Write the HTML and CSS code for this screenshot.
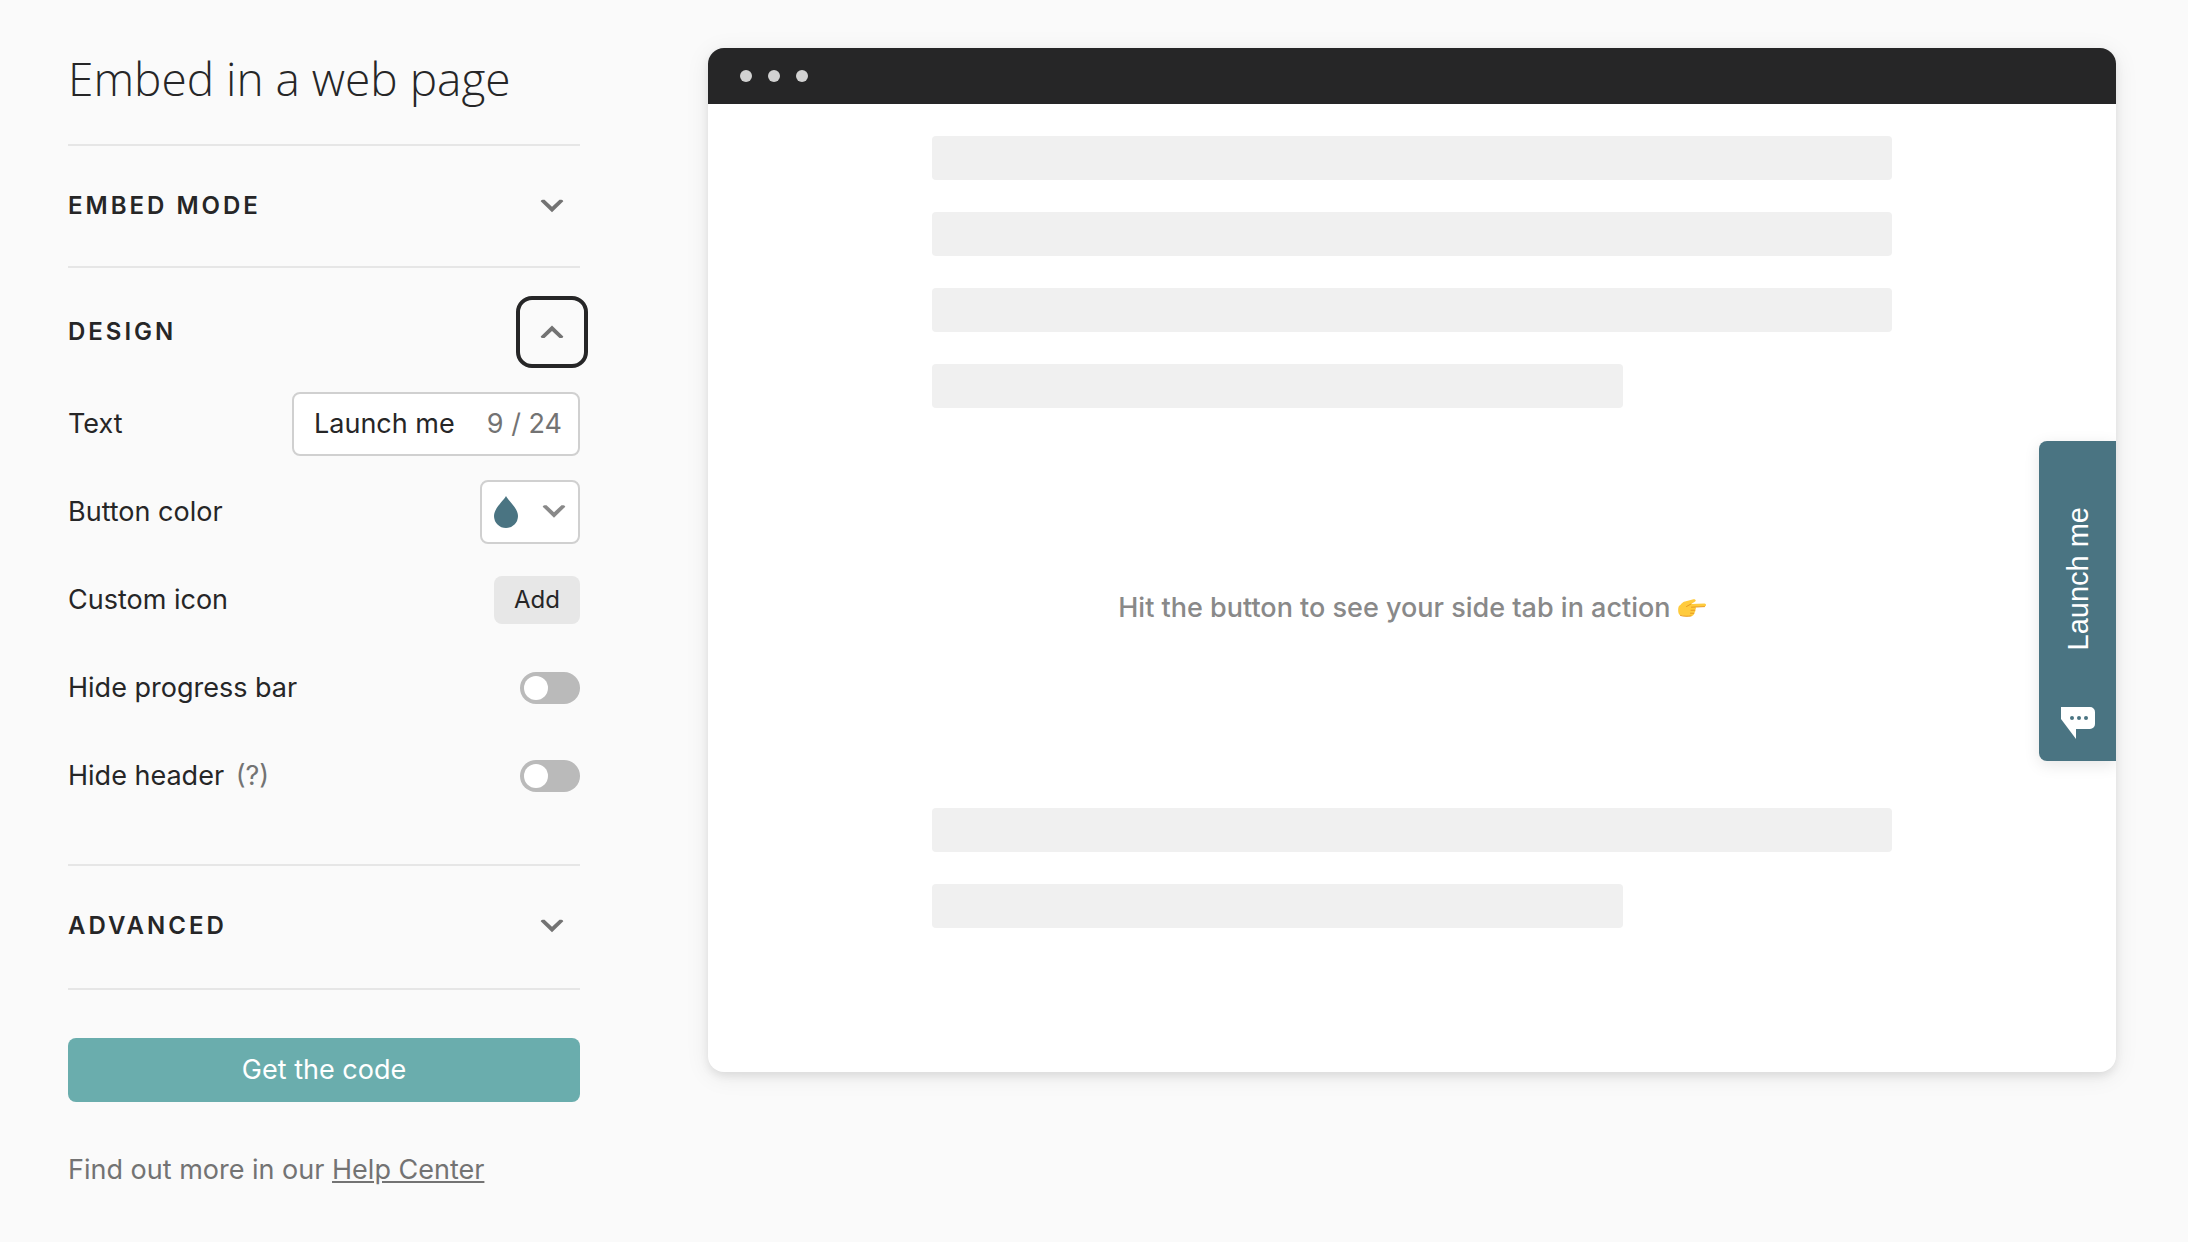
FILE: index.html
```html
<!DOCTYPE html>
<html lang="en">
<head>
<meta charset="utf-8">
<title>Embed in a web page</title>
<link rel="stylesheet" href="styles.css">
</head>
<body>
<main class="page">
  <aside class="settings">
    <h1 class="title">Embed in a web page</h1>
    <section class="section">
      <div class="section-head">
        <h2 class="section-name">Embed mode</h2>
        <button class="toggle-btn" type="button" aria-label="Expand embed mode" aria-expanded="false">
          <svg class="chevron" viewBox="0 0 24 14"><path d="M12 13.2.7 2.2Q1 .7 2.5.7h2L12 7.7l7.5-7h2q1.5 0 1.8 1.5Z"/></svg>
        </button>
      </div>
    </section>
    <section class="section section-open">
      <div class="section-head">
        <h2 class="section-name">Design</h2>
        <button class="toggle-btn is-focused" type="button" aria-label="Collapse design" aria-expanded="true">
          <svg class="chevron" viewBox="0 0 24 14"><path d="M12 .5.7 11.5Q1 13 2.5 13h2L12 6l7.5 7h2q1.5 0 1.8-1.5Z"/></svg>
        </button>
      </div>
      <div class="row">
        <label for="label-text">Text</label>
        <div class="text-field">
          <input id="label-text" class="text-input" type="text" value="Launch me" maxlength="24">
          <span class="counter">9 / 24</span>
        </div>
      </div>
      <div class="row">
        <span id="color-label">Button color</span>
        <button class="color-btn" type="button" aria-labelledby="color-label">
          <svg class="drop" viewBox="0 0 24 32"><path d="M12 0C9.500 5 0 12 0 20a12 12 0 0 0 24 0C24 12 14.500 5 12 0Z"/></svg>
          <svg class="chevron chevron-light" viewBox="0 0 24 14"><path d="M12 12.700.7 1.700Q1 .2 2.500.2h2L12 7.200l7.500-7h2q1.500 0 1.800 1.500Z"/></svg>
        </button>
      </div>
      <div class="row">
        <span>Custom icon</span>
        <button class="add-btn" type="button">Add</button>
      </div>
      <div class="row">
        <label for="hide-progress">Hide progress bar</label>
        <input id="hide-progress" class="switch" type="checkbox" role="switch">
      </div>
      <div class="row">
        <label for="hide-header">Hide header <span class="hint">(?)</span></label>
        <input id="hide-header" class="switch" type="checkbox" role="switch">
      </div>
    </section>
    <section class="section section-last">
      <div class="section-head">
        <h2 class="section-name">Advanced</h2>
        <button class="toggle-btn" type="button" aria-label="Expand advanced" aria-expanded="false">
          <svg class="chevron" viewBox="0 0 24 14"><path d="M12 13.2.7 2.2Q1 .7 2.5.7h2L12 7.7l7.5-7h2q1.5 0 1.8 1.5Z"/></svg>
        </button>
      </div>
    </section>
    <div class="actions">
      <button class="primary-btn" type="button">Get the code</button>
      <p class="help">Find out more in our <a class="help-link" href="#help">Help Center</a></p>
    </div>
  </aside>

  <section class="preview" aria-label="Preview">
    <div class="preview-bar"><i class="dot"></i><i class="dot"></i><i class="dot"></i></div>
    <div class="preview-body">
      <div class="lines">
        <div class="line"></div>
        <div class="line"></div>
        <div class="line"></div>
        <div class="line line-short"></div>
      </div>
      <p class="message">Hit the button to see your side tab in action
        <svg class="hand" viewBox="0 0 28 18" role="img" aria-label="pointing right"><path fill="#ffcb3d" d="M1 7C3 6 4 3 7 2.500L15.500.200C18 0 18.500 2 16.500 3L13 5l13.500-.500c2 0 2 3 0 3L17.500 8c.8 1 .5 2.500-.5 3 .6 1.200 0 2.500-1 3 .3 2-1.500 3.300-4 3.300-4 0-8-.3-10.500-1.500C-.2 14-.2 9 1 7Z"/><path fill="none" stroke="#e89b20" stroke-width="1" stroke-linecap="round" d="M8.500 7.500 13 5m13.500 2.600L13.500 8.200m3.500 3-4 .1m3 3-3.500-.1M2.500 16.500c3 1 8 1 10.500.4"/></svg></p>
      <div class="lines">
        <div class="line"></div>
        <div class="line line-short"></div>
      </div>
    </div>
    <button class="side-tab" type="button">
      <span class="side-tab-text">Launch me</span>
      <svg class="chat" viewBox="0 0 34 34"><path fill="#fff" d="M0 1h29a5 5 0 0 1 5 5v12a5 5 0 0 1-5 5H15v10L0 13Z"/><g fill="#4a7482"><circle cx="11" cy="12" r="2"/><circle cx="18" cy="12" r="2"/><circle cx="25" cy="12" r="2"/></g></svg>
    </button>
  </section>
</main>
</body>
</html>
```
FILE: styles.css
```css
* {
  box-sizing: border-box;
}

body {
  margin: 0;
  min-height: 100vh;
  background: #fafafa;
  color: #262627;
  font-family: Inter, "Liberation Sans", sans-serif;
  font-size: 27px;
  line-height: 40px;
}

button,
input {
  margin: 0;
  padding: 0;
  border: 0;
  color: inherit;
  font: inherit;
}

.page {
  display: flex;
  align-items: flex-start;
  gap: 128px;
  padding: 48px 72px 48px 68px;
}

.settings {
  flex: 0 0 512px;
}

.title {
  margin: 0 0 36px;
  font-family: "Open Sans", sans-serif;
  font-size: 46px;
  font-weight: 300;
  line-height: 60px;
}

.section {
  padding: 24px 0;
  border-top: 2px solid #e6e6e6;
}

.section-open {
  padding: 28px 0 44px;
}

.section-last {
  padding-bottom: 26px;
}

.section-head {
  display: flex;
  align-items: center;
  justify-content: space-between;
}

.section-open .section-head {
  margin-bottom: 12px;
}

.section-name {
  margin: 0;
  font-size: 24px;
  font-weight: 600;
  letter-spacing: 3px;
  line-height: 32px;
  text-transform: uppercase;
}

.toggle-btn {
  display: flex;
  align-items: center;
  justify-content: center;
  width: 72px;
  height: 72px;
  margin-right: -8px;
  border: 4px solid transparent;
  border-radius: 16px;
  background: none;
}

.is-focused {
  border-color: #262627;
}

.chevron {
  width: 24px;
  height: 14px;
  fill: #737373;
}

.chevron-light {
  fill: #898989;
}

.row {
  display: flex;
  align-items: center;
  justify-content: space-between;
  height: 88px;
}

.text-field {
  display: flex;
  align-items: center;
  width: 288px;
  height: 64px;
  padding: 0 16px 0 20px;
  border: 2px solid #d0d0d0;
  border-radius: 8px;
  background: #fff;
}

.text-input {
  flex: 1;
  min-width: 0;
  outline: 0;
  background: none;
}

.counter {
  color: #737373;
}

.color-btn {
  display: flex;
  align-items: center;
  justify-content: space-between;
  width: 100px;
  height: 64px;
  padding: 0 12px;
  border: 2px solid #d0d0d0;
  border-radius: 8px;
  background: #fff;
}

.drop {
  width: 24px;
  height: 32px;
  fill: #4a7482;
}

.add-btn {
  height: 48px;
  padding: 0 20px;
  border-radius: 8px;
  background: #e7e7e7;
  font-size: 24px;
}

.switch {
  display: flex;
  align-items: center;
  width: 60px;
  height: 32px;
  padding: 0 4px;
  border-radius: 16px;
  background: #bababa;
  appearance: none;
}

.switch::before {
  width: 24px;
  height: 24px;
  border-radius: 50%;
  background: #fff;
  content: "";
}

.switch:checked {
  justify-content: flex-end;
}

.hint {
  margin-left: 4px;
  color: #737373;
}

.actions {
  padding-top: 48px;
  border-top: 2px solid #e6e6e6;
}

.primary-btn {
  width: 100%;
  height: 64px;
  border-radius: 8px;
  background: #6aadad;
  color: #fff;
}

.help {
  margin: 48px 0 0;
  color: #737373;
}

.help-link {
  color: inherit;
}

.preview {
  position: relative;
  flex: 1;
  min-width: 0;
  overflow: hidden;
  border-radius: 16px;
  background: #fff;
  box-shadow: 0 4px 8px rgba(0, 0, 0, 0.08), 0 4px 24px rgba(0, 0, 0, 0.08);
}

.preview-bar {
  display: flex;
  align-items: center;
  gap: 16px;
  height: 56px;
  padding: 0 32px;
  background: #262627;
}

.dot {
  width: 12px;
  height: 12px;
  border-radius: 50%;
  background: #d2d2d2;
}

.preview-body {
  max-width: 960px;
  margin: 0 auto;
  padding: 32px 0 144px;
}

.lines {
  display: grid;
  gap: 32px;
}

.line {
  height: 44px;
  border-radius: 4px;
  background: #f0f0f0;
}

.line-short {
  width: 72%;
}

.message {
  margin: 180px 0;
  color: #898989;
  font-weight: 500;
  text-align: center;
}

.hand {
  width: 28px;
  height: 18px;
}

.side-tab {
  position: absolute;
  top: 393px;
  right: 0;
  display: flex;
  flex-direction: column;
  align-items: center;
  justify-content: flex-end;
  gap: 56px;
  width: 77px;
  height: 320px;
  padding-bottom: 21px;
  border-radius: 8px 0 0 8px;
  background: #4a7482;
  box-shadow: 0 4px 16px rgba(0, 0, 0, 0.1);
  color: #fff;
  font-family: "Liberation Sans", sans-serif;
  font-size: 29px;
  line-height: 40px;
}

.side-tab-text {
  transform: rotate(180deg);
  writing-mode: vertical-rl;
}

.chat {
  width: 34px;
  height: 34px;
}
```
